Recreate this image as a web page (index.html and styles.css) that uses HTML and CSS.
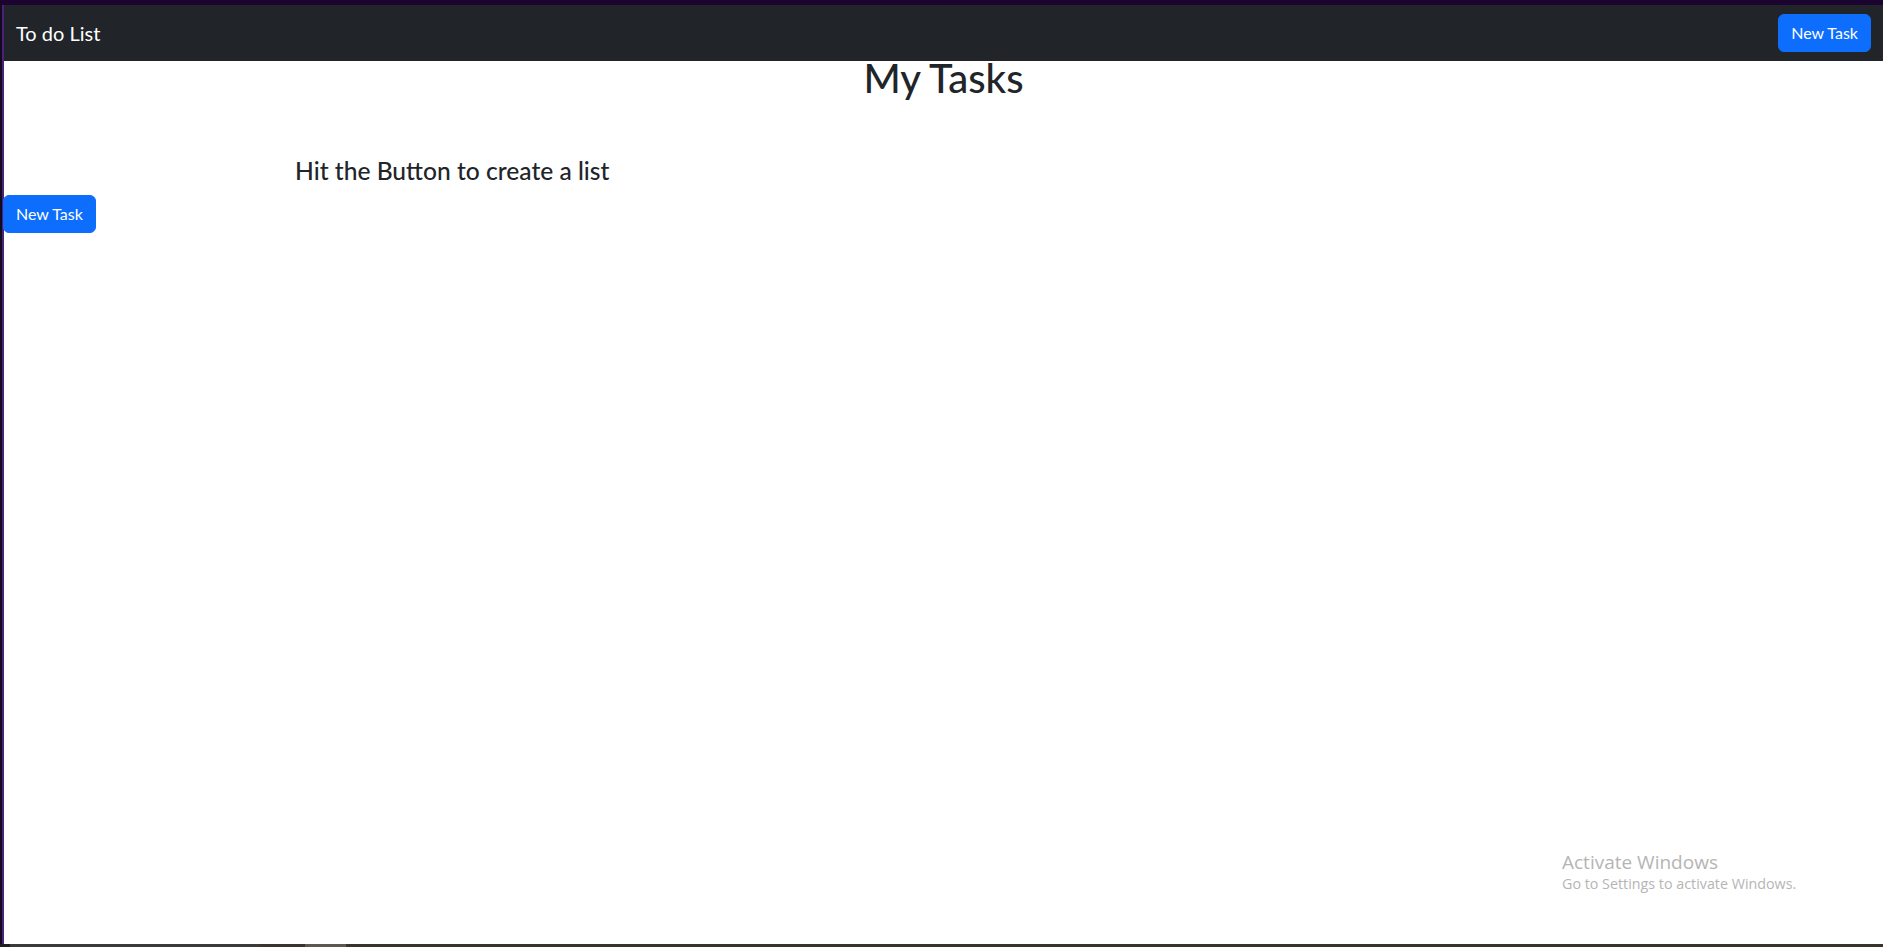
FILE: index.html
```html
<!DOCTYPE html>
<html lang="en">
<head>
<meta charset="utf-8">
<title>To do List</title>
<link rel="stylesheet" href="styles.css">
</head>
<body>
<div class="frame-top"></div>
<div class="frame-mid">
  <div class="frame-left"></div>
  <div class="app">
    <nav class="navbar">
      <span class="brand">To do List</span>
      <button class="btn btn-primary" type="button">New Task</button>
    </nav>
    <main class="content">
      <h1 class="title">My Tasks</h1>
      <h4 class="hint">Hit the Button to create a list</h4>
      <button class="btn btn-primary btn-side" type="button">New Task</button>
    </main>
    <div class="watermark">
      <div class="wm-title">Activate Windows</div>
      <div class="wm-sub">Go to Settings to activate Windows.</div>
    </div>
  </div>
</div>
<div class="frame-bottom"></div>
</body>
</html>
```
FILE: styles.css
```css
html, body {
  margin: 0;
  padding: 0;
  height: 100%;
}
body {
  display: flex;
  flex-direction: column;
  background: #140a22;
  font-family: "Lato", "Noto Sans", sans-serif;
  color: #212529;
  overflow: hidden;
}
.frame-top {
  height: 5px;
  background: #1b0530;
  flex: none;
}
.frame-mid {
  flex: 1;
  display: flex;
  min-height: 0;
}
.frame-left {
  width: 2px;
  background: #120a1e;
  border-right: 2px solid #4a2378;
  flex: none;
}
.app {
  flex: 1;
  position: relative;
  background: #fff;
  display: flex;
  flex-direction: column;
}
.frame-bottom {
  height: 3px;
  flex: none;
  background: linear-gradient(90deg, #1f1f22 0, #1f1f22 10px, #3a3a3c 10px, #3a3a3c 260px, #3b342e 260px, #3b342e 305px, #5e5750 305px, #5e5750 346px, #3a332c 346px, #3a332c 100%);
}
.navbar {
  height: 56px;
  background: #212529;
  display: flex;
  align-items: center;
  justify-content: space-between;
  padding: 0 12px;
  flex: none;
}
.brand {
  color: #fff;
  font-size: 20px;
  line-height: 30px;
}
.btn {
  font-family: inherit;
  font-size: 16px;
  line-height: 24px;
  padding: 6px 12px;
  border-radius: 6px;
  border: 1px solid transparent;
  cursor: pointer;
}
.btn-primary {
  background: #0d6efd;
  border-color: #0d6efd;
  color: #fff;
}
.content {
  display: flex;
  flex-direction: column;
  align-items: flex-start;
}
.title {
  align-self: stretch;
  text-align: center;
  font-size: 40px;
  font-weight: 500;
  line-height: 48px;
  margin: -7px 0 0;
}
.hint {
  font-size: 24.6px;
  font-weight: 500;
  line-height: 29px;
  margin: 54px 0 0 291px;
}
.btn-side {
  margin-top: 10px;
  margin-left: -1px;
}
.watermark {
  position: absolute;
  left: 1558px;
  bottom: 50px;
  color: #b5b5b5;
  font-family: "Open Sans", "Noto Sans", sans-serif;
}
.wm-title {
  font-size: 19px;
  line-height: 24px;
}
.wm-sub {
  font-size: 14.3px;
  line-height: 20px;
}
```
